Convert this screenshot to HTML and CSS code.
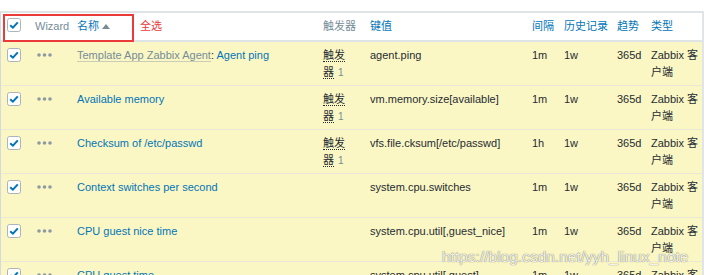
FILE: index.html
```html
<!DOCTYPE html>
<html lang="zh">
<head>
    <meta charset="UTF-8">
    <title>监控项</title>
    <link rel="stylesheet" href="styles.css">
</head>
<body>
<div class="page">
    <div class="list">
        <div class="row head">
            <div class="cell cell-check"><svg class="checkbox" width="14" height="14" viewBox="0 0 14 14"><rect x="0.5" y="0.5" width="13" height="13" rx="2" fill="#fff" stroke="#aab4ba"/><path d="M3.2 7.2 L5.9 9.7 L10.8 4.3" fill="none" stroke="#0275b8" stroke-width="2"/></svg></div>
            <div class="cell muted">Wizard</div>
            <div class="cell"><a class="link">名称</a> <span class="sort-up"></span></div>
            <div class="cell cell-trig muted">触发器</div>
            <div class="cell"><a class="link">键值</a></div>
            <div class="cell"><a class="link">间隔</a></div>
            <div class="cell"><a class="link">历史记录</a></div>
            <div class="cell"><a class="link">趋势</a></div>
            <div class="cell"><a class="link">类型</a></div>
        </div>

        <div class="row item">
            <div class="cell cell-check"><svg class="checkbox" width="14" height="14" viewBox="0 0 14 14"><rect x="0.5" y="0.5" width="13" height="13" rx="2" fill="#fff" stroke="#aab4ba"/><path d="M3.2 7.2 L5.9 9.7 L10.8 4.3" fill="none" stroke="#0275b8" stroke-width="2"/></svg></div>
            <div class="cell"><svg class="dots" width="15" height="4" viewBox="0 0 15 4"><circle cx="2" cy="2" r="1.8"/><circle cx="7.5" cy="2" r="1.8"/><circle cx="13" cy="2" r="1.8"/></svg></div>
            <div class="cell"><a class="template">Template App Zabbix Agent</a>: <a class="link">Agent ping</a></div>
            <div class="cell cell-trig"><a class="trigger">触发器</a> <sup class="count">1</sup></div>
            <div class="cell">agent.ping</div>
            <div class="cell">1m</div>
            <div class="cell">1w</div>
            <div class="cell">365d</div>
            <div class="cell">Zabbix 客户端</div>
        </div>

        <div class="row item">
            <div class="cell cell-check"><svg class="checkbox" width="14" height="14" viewBox="0 0 14 14"><rect x="0.5" y="0.5" width="13" height="13" rx="2" fill="#fff" stroke="#aab4ba"/><path d="M3.2 7.2 L5.9 9.7 L10.8 4.3" fill="none" stroke="#0275b8" stroke-width="2"/></svg></div>
            <div class="cell"><svg class="dots" width="15" height="4" viewBox="0 0 15 4"><circle cx="2" cy="2" r="1.8"/><circle cx="7.5" cy="2" r="1.8"/><circle cx="13" cy="2" r="1.8"/></svg></div>
            <div class="cell"><a class="link">Available memory</a></div>
            <div class="cell cell-trig"><a class="trigger">触发器</a> <sup class="count">1</sup></div>
            <div class="cell">vm.memory.size[available]</div>
            <div class="cell">1m</div>
            <div class="cell">1w</div>
            <div class="cell">365d</div>
            <div class="cell">Zabbix 客户端</div>
        </div>

        <div class="row item">
            <div class="cell cell-check"><svg class="checkbox" width="14" height="14" viewBox="0 0 14 14"><rect x="0.5" y="0.5" width="13" height="13" rx="2" fill="#fff" stroke="#aab4ba"/><path d="M3.2 7.2 L5.9 9.7 L10.8 4.3" fill="none" stroke="#0275b8" stroke-width="2"/></svg></div>
            <div class="cell"><svg class="dots" width="15" height="4" viewBox="0 0 15 4"><circle cx="2" cy="2" r="1.8"/><circle cx="7.5" cy="2" r="1.8"/><circle cx="13" cy="2" r="1.8"/></svg></div>
            <div class="cell"><a class="link">Checksum of /etc/passwd</a></div>
            <div class="cell cell-trig"><a class="trigger">触发器</a> <sup class="count">1</sup></div>
            <div class="cell">vfs.file.cksum[/etc/passwd]</div>
            <div class="cell">1h</div>
            <div class="cell">1w</div>
            <div class="cell">365d</div>
            <div class="cell">Zabbix 客户端</div>
        </div>

        <div class="row item">
            <div class="cell cell-check"><svg class="checkbox" width="14" height="14" viewBox="0 0 14 14"><rect x="0.5" y="0.5" width="13" height="13" rx="2" fill="#fff" stroke="#aab4ba"/><path d="M3.2 7.2 L5.9 9.7 L10.8 4.3" fill="none" stroke="#0275b8" stroke-width="2"/></svg></div>
            <div class="cell"><svg class="dots" width="15" height="4" viewBox="0 0 15 4"><circle cx="2" cy="2" r="1.8"/><circle cx="7.5" cy="2" r="1.8"/><circle cx="13" cy="2" r="1.8"/></svg></div>
            <div class="cell"><a class="link">Context switches per second</a></div>
            <div class="cell cell-trig"></div>
            <div class="cell">system.cpu.switches</div>
            <div class="cell">1m</div>
            <div class="cell">1w</div>
            <div class="cell">365d</div>
            <div class="cell">Zabbix 客户端</div>
        </div>

        <div class="row item">
            <div class="cell cell-check"><svg class="checkbox" width="14" height="14" viewBox="0 0 14 14"><rect x="0.5" y="0.5" width="13" height="13" rx="2" fill="#fff" stroke="#aab4ba"/><path d="M3.2 7.2 L5.9 9.7 L10.8 4.3" fill="none" stroke="#0275b8" stroke-width="2"/></svg></div>
            <div class="cell"><svg class="dots" width="15" height="4" viewBox="0 0 15 4"><circle cx="2" cy="2" r="1.8"/><circle cx="7.5" cy="2" r="1.8"/><circle cx="13" cy="2" r="1.8"/></svg></div>
            <div class="cell"><a class="link">CPU guest nice time</a></div>
            <div class="cell cell-trig"></div>
            <div class="cell">system.cpu.util[,guest_nice]</div>
            <div class="cell">1m</div>
            <div class="cell">1w</div>
            <div class="cell">365d</div>
            <div class="cell">Zabbix 客户端</div>
        </div>

        <div class="row item">
            <div class="cell cell-check"><svg class="checkbox" width="14" height="14" viewBox="0 0 14 14"><rect x="0.5" y="0.5" width="13" height="13" rx="2" fill="#fff" stroke="#aab4ba"/><path d="M3.2 7.2 L5.9 9.7 L10.8 4.3" fill="none" stroke="#0275b8" stroke-width="2"/></svg></div>
            <div class="cell"><svg class="dots" width="15" height="4" viewBox="0 0 15 4"><circle cx="2" cy="2" r="1.8"/><circle cx="7.5" cy="2" r="1.8"/><circle cx="13" cy="2" r="1.8"/></svg></div>
            <div class="cell"><a class="link">CPU guest time</a></div>
            <div class="cell cell-trig"></div>
            <div class="cell">system.cpu.util[,guest]</div>
            <div class="cell">1m</div>
            <div class="cell">1w</div>
            <div class="cell">365d</div>
            <div class="cell">Zabbix 客户端</div>
        </div>
    </div>

    <!-- annotation drawn over the screenshot -->
    <div class="note-box"></div>
    <span class="note-text">全选</span>
    <div class="watermark">https://blog.csdn.net/yyh_linux_note</div>
</div>
</body>
</html>
```

FILE: styles.css
```css
body {
    margin: 0;
    background-color: #fff;
    color: #1f2c33;
    font-family: "Liberation Sans", Arial, "Noto Sans CJK SC", sans-serif;
    font-size: 11px;
    line-height: 17px;
}
.page {
    position: relative;
    padding-top: 11px;
    height: 264px;
    overflow: hidden;
}
.list {
    width: 701px;
    border-top: 2px solid #dfe4e7;
    border-left: 1px solid #d6dadd;
    border-right: 2px solid #e2e5e7;
}
.row {
    display: grid;
    grid-template-columns: 29px 42px 246px 47px 162px 32px 53px 34px 1fr;
}
.head {
    background-color: #fff;
    border-bottom: 2px solid #dfe4e7;
    white-space: nowrap;
}
.head .cell {
    padding-bottom: 5px;
}
.item {
    height: 44px;
    box-sizing: border-box;
    background-color: #fbf7c4;
    border-bottom: 1px solid #ebe9d6;
}
.cell {
    min-width: 0;
    padding: 5px 2px 4px 5px;
}
.cell-check {
    padding-left: 6px;
}
.item .checkbox {
    margin-top: 1px;
}
.checkbox {
    display: block;
}
.cell-trig {
    padding-right: 10px;
}
.muted {
    color: #768d99;
}
.link {
    color: #0275b8;
}
.template {
    color: #768d99;
    border-bottom: 1px solid #c9cdb8;
}
.trigger {
    color: #1f2c33;
    border-bottom: 1px dotted #1f2c33;
}
.count {
    color: #768d99;
    font-size: 10px;
    vertical-align: baseline;
    margin-left: 1px;
}
.sort-up {
    display: inline-block;
    width: 0;
    height: 0;
    border-left: 4px solid transparent;
    border-right: 4px solid transparent;
    border-bottom: 5px solid #7b8b93;
    vertical-align: 1px;
}
.dots {
    display: block;
    margin: 6px 0 0 2px;
    fill: #8e9aa1;
}
.note-box {
    position: absolute;
    left: 3px;
    top: 14px;
    width: 127px;
    height: 24px;
    border: 2px solid #ea3a3a;
}
.note-text {
    position: absolute;
    left: 140px;
    top: 18px;
    color: #ea3a3a;
    font-size: 11px;
}
.watermark {
    position: absolute;
    left: 442px;
    top: 248px;
    color: rgba(255, 255, 255, 0.92);
    font-size: 15.5px;
    line-height: 18px;
    text-shadow: 0 0 1px rgba(0, 0, 0, 0.5), 0 0 1px rgba(0, 0, 0, 0.3);
}
```
